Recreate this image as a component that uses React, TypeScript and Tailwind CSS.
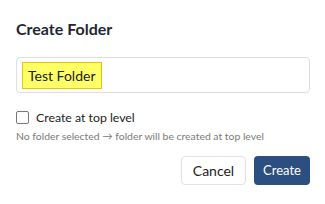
import React from "react";

export default function App() {
  return (
    <div className="w-[325px] h-[204px] bg-white px-4 pt-[19px] font-['Lato','Noto_Sans',sans-serif]">
      <h2 className="text-[16px] font-bold text-[#1f2733] leading-[20px]">Create Folder</h2>
      <div className="mt-[18px] h-[36px] w-[294px] rounded-[4px] border border-[#dedede] flex items-center pl-[5px]">
        <span className="bg-[#ffff66] border border-[#f2c200] px-[5px] h-[27px] flex items-center text-[14px] text-[#222]">
          Test Folder
        </span>
      </div>
      <label className="mt-[18px] flex items-center gap-[7px] h-[13px]">
        <span className="w-[13px] h-[13px] rounded-[2px] border border-[#777] bg-white" />
        <span className="text-[12.3px] text-[#222] leading-[13px]">Create at top level</span>
      </label>
      <p className="mt-[5px] text-[10.4px] text-[#7a7a7a] leading-[14px]">
        No folder selected → folder will be created at top level
      </p>
      <div className="mt-[13px] flex justify-end gap-[8px] w-[294px]">
        <button className="h-[29px] w-[65px] rounded-[4px] border border-[#e2e2e2] bg-white text-[14px] text-[#222]">
          Cancel
        </button>
        <button className="h-[29px] w-[56px] rounded-[4px] bg-[#2b4f80] text-[13px] text-white">
          Create
        </button>
      </div>
    </div>
  );
}
